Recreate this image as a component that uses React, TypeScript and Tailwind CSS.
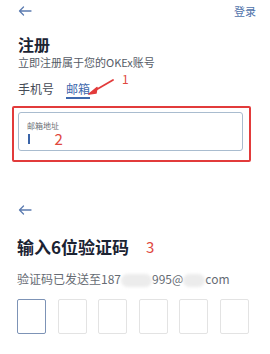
import React from 'react'

function BackArrow() {
  return (
    <svg width="14" height="10" viewBox="0 0 14 10" fill="none">
      <path d="M13 5H1.5M5.5 1L1.5 5L5.5 9" stroke="#5b7bb0" strokeWidth="1.3" strokeLinecap="round" strokeLinejoin="round" />
    </svg>
  )
}

function Blob({ w }: { w: number }) {
  return <span className="inline-block h-[13px] rounded-full bg-[#ececec] blur-[1.5px] align-middle" style={{ width: w }} />
}

export default function App() {
  return (
    <div className="relative w-[270px] h-[354px] overflow-hidden bg-white font-['Noto_Sans_CJK_SC','Noto_Sans',sans-serif]">
      {/* Register form */}
      <div className="flex items-center justify-between h-[22px] pl-[18px] pr-[14px]">
        <BackArrow />
        <span className="text-[11px] leading-[14px] text-[#4f72aa]">登录</span>
      </div>

      <div className="px-[18px]">
        <h1 className="mt-[12px] text-[16px] leading-[20px] font-bold text-[#1b2333]">注册</h1>
        <p className="mt-[2px] w-fit text-[11px] leading-[13px] text-[#555b66]">立即注册属于您的OKEx账号</p>
        <div className="mt-[13px] flex items-start gap-[12px] text-[12px] leading-[14px]">
          <span className="text-[#444a55]">手机号</span>
          <span className="flex flex-col text-[#3e68ad]">
            <span>邮箱</span>
            <span className="mt-[1px] h-[1.5px] bg-[#3e68ad]" />
          </span>
        </div>
      </div>

      <div className="mt-[7px] ml-[12px] w-[239px] h-[56px] border-2 border-[#e23b3b] rounded-[2px] pl-[4px] pr-[6px] pt-[4px]">
        <div className="h-[39px] border border-[#a9bccf] rounded-[3px] px-[8px] pt-[8px]">
          <div className="text-[8px] leading-[10px] text-[#6b6f76]">邮箱地址</div>
          <div className="flex items-center h-[16px]">
            <span className="ml-[1px] w-[1.5px] h-[10px] bg-[#3a64a8]" />
            <span className="ml-[25px] text-[15px] leading-[16px] text-[#e0483e]">2</span>
          </div>
        </div>
      </div>

      {/* Verification code */}
      <div className="mt-[44px] pl-[18px] h-[9px] flex items-center">
        <BackArrow />
      </div>
      <div className="mt-[22px] pl-[17px] flex items-center gap-[17px]">
        <h2 className="text-[17px] leading-[20px] font-bold text-[#1b2333]">输入6位验证码</h2>
        <span className="text-[15px] leading-[20px] text-[#e0483e]">3</span>
      </div>
      <p className="mt-[14px] pl-[17px] text-[12px] leading-[16px] text-[#666b73] whitespace-nowrap">
        验证码已发送至187<Blob w={31} />995@<Blob w={22} />com
      </p>
      <div className="mt-[12px] ml-[17px] w-[232px] flex justify-between">
        {[0, 1, 2, 3, 4, 5].map((i) => (
          <div
            key={i}
            className={`w-[29px] h-[35px] rounded-[2px] border ${i === 0 ? 'border-[#7d93b6]' : 'border-[#e3e3e3]'}`}
          />
        ))}
      </div>

      {/* Annotation 1 */}
      <span className="absolute left-[122px] top-[73px] text-[12px] leading-[12px] text-[#e0483e]">1</span>
      <svg className="absolute left-[86px] top-[77px]" width="30" height="20" viewBox="0 0 30 20" fill="none">
        <path d="M27 3L8 14" stroke="#e23b3b" strokeWidth="1.8" strokeLinecap="round" />
        <path d="M3 17L11 10.5L10 16Z" fill="#e23b3b" stroke="#e23b3b" strokeWidth="1.5" strokeLinejoin="round" />
      </svg>
    </div>
  )
}
